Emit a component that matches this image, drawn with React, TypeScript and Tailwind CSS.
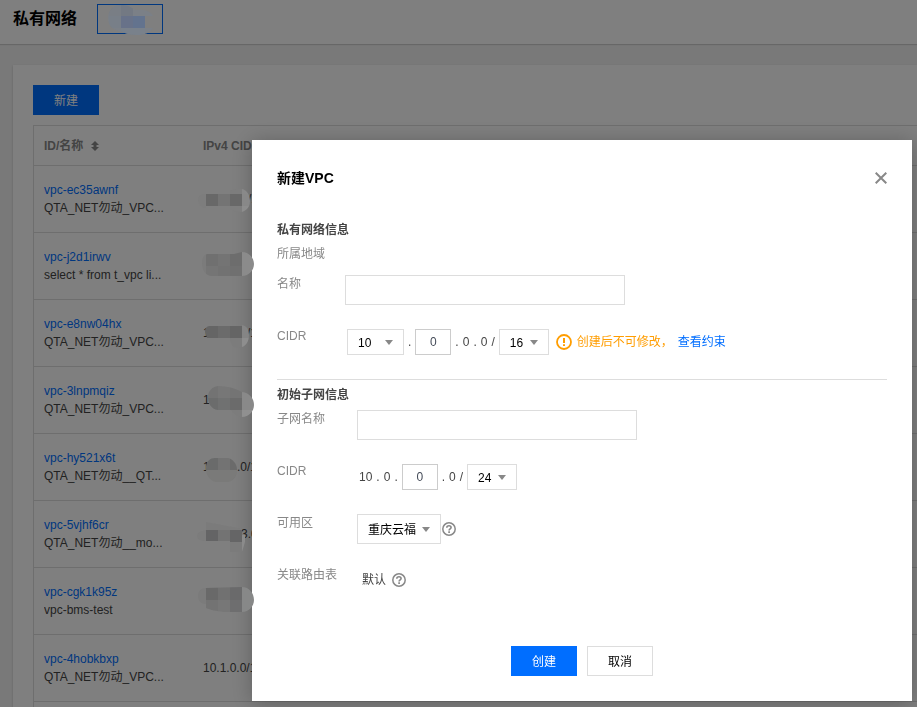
import { useState } from 'react';
import type { ReactNode } from 'react';

// [x, y, width, height, color]
type Tile = [number, number, number, number, string];

interface Vpc {
  id: string;
  name: string;
  cidr?: string;
  head?: string;
  tail?: string;
  headWidth?: string;
  mask?: { shape: string; tiles: Tile[] };
}

const vpcs: Vpc[] = [
  {
    id: 'vpc-ec35awnf',
    name: 'QTA_NET勿动_VPC...',
    tail: '/16',
    headWidth: 'w-[45px]',
    mask: {
      shape: 'M5 34c0-4 3-6 8-6h20c4-5 8-5 16-5 5 1 8 6 8 12s-3 9-8 11c-5 0-10-1-13-4H13c-5 0-8-4-8-8z',
      tiles: [
        [0, 16, 13, 36, '#7d7d7d'],
        [13, 28, 12, 12, '#686868'],
        [25, 28, 12, 12, '#747474'],
        [37, 28, 12, 12, '#686868'],
        [37, 16, 12, 12, '#7d7d7d'],
        [37, 40, 12, 12, '#7e7e7e'],
        [49, 16, 12, 12, '#898989'],
        [49, 28, 12, 12, '#888888'],
        [49, 40, 12, 12, '#8d8d8d'],
      ],
    },
  },
  {
    id: 'vpc-j2d1irwv',
    name: 'select * from t_vpc li...',
    mask: {
      shape: 'M9 30c0-5 2-9 6-9h26l8-2c7 0 12 6 12 12s-5 12-12 12H19c-6 0-10-6-10-13z',
      tiles: [
        [0, 16, 13, 36, '#7b7b7b'],
        [13, 16, 12, 17, '#707070'],
        [25, 16, 12, 17, '#747474'],
        [37, 16, 12, 17, '#6d6d6d'],
        [13, 33, 12, 17, '#757575'],
        [25, 33, 12, 17, '#727272'],
        [37, 33, 12, 17, '#707070'],
        [49, 16, 13, 34, '#8b8b8b'],
      ],
    },
  },
  {
    id: 'vpc-e8nw04hx',
    name: 'QTA_NET勿动_VPC...',
    head: '1',
    tail: '/16',
    headWidth: 'w-[44px]',
    mask: {
      shape: 'M12 32c0-4 2-6 5-6h26l6-1c5 1 7 5 7 10 0 6-3 11-7 12-6 2-11 1-12-9H14z',
      tiles: [
        [12, 26, 13, 12, '#656565'],
        [25, 26, 12, 12, '#6b6b6b'],
        [37, 26, 12, 12, '#656565'],
        [37, 38, 12, 12, '#7c7c7c'],
        [49, 20, 12, 18, '#858585'],
        [49, 38, 12, 12, '#8e8e8e'],
      ],
    },
  },
  {
    id: 'vpc-3lnpmqiz',
    name: 'QTA_NET勿动_VPC...',
    head: '1',
    mask: {
      shape: 'M15 30c0-6 4-10 10-11 9 0 17 2 24 6 8 1 12 7 12 13s-5 12-12 12c-4 0-7-2-11-7H25c-7-1-10-7-10-13z',
      tiles: [
        [12, 16, 13, 15, '#737373'],
        [25, 16, 12, 15, '#777777'],
        [37, 16, 12, 15, '#747474'],
        [12, 31, 13, 12, '#6b6c6c'],
        [25, 31, 12, 12, '#707171'],
        [37, 31, 12, 12, '#6b6b6b'],
        [37, 43, 12, 12, '#7c7c7c'],
        [49, 16, 13, 27, '#898989'],
        [49, 43, 13, 12, '#909090'],
      ],
    },
  },
  {
    id: 'vpc-hy521x6t',
    name: 'QTA_NET勿动__QT...',
    head: '1',
    tail: '.0/16',
    headWidth: 'w-[34px]',
    mask: {
      shape: 'M13 32c1-5 4-8 9-8h13c5 1 9 6 9 12s-3 11-9 12H23c-6-1-10-7-10-13z',
      tiles: [
        [12, 22, 13, 14, '#6a6b6b'],
        [25, 22, 12, 14, '#737373'],
        [37, 22, 10, 14, '#6b6b6b'],
        [12, 36, 35, 14, '#7a7a79'],
      ],
    },
  },
  {
    id: 'vpc-5vjhf6cr',
    name: 'QTA_NET勿动__mo...',
    tail: '3.0/16',
    headWidth: 'w-[38px]',
    mask: {
      shape: 'M4 35c0-3 3-5 9-6v-8l32 6 4 1h3v13l-3 10H37V40H13c-6 0-9-2-9-5z',
      tiles: [
        [0, 16, 13, 36, '#7c7c7c'],
        [13, 20, 36, 9, '#7b7b7b'],
        [13, 29, 12, 12, '#646465'],
        [25, 29, 12, 12, '#737373'],
        [37, 29, 12, 12, '#656566'],
        [37, 41, 12, 12, '#7b7b7b'],
        [49, 34, 6, 16, '#8b8b8b'],
      ],
    },
  },
  {
    id: 'vpc-cgk1k95z',
    name: 'vpc-bms-test',
    mask: {
      shape: 'M5 28c0-5 3-8 8-8l36-1c7 0 12 6 12 13 0 6-5 12-12 12H31c-8-1-13-2-18-4v-4c-5 0-8-3-8-8z',
      tiles: [
        [0, 16, 13, 36, '#7b7b7b'],
        [13, 16, 12, 16, '#696969'],
        [25, 16, 12, 16, '#717171'],
        [37, 16, 12, 16, '#6a6a6b'],
        [13, 32, 12, 14, '#737373'],
        [25, 32, 12, 14, '#777777'],
        [37, 32, 12, 14, '#6e6e6f'],
        [49, 16, 13, 34, '#878888'],
      ],
    },
  },
  { id: 'vpc-4hobkbxp', name: 'QTA_NET勿动_VPC...', cidr: '10.1.0.0/16' },
];

function Mosaic({ id, shape, tiles }: { id: string; shape: string; tiles: Tile[] }) {
  return (
    <svg
      className="pointer-events-none absolute left-0 top-0 z-20"
      width="66"
      height="66"
      viewBox="0 0 66 66"
      aria-hidden="true"
    >
      <clipPath id={id}>
        <path d={shape} />
      </clipPath>
      <g clipPath={`url(#${id})`} shapeRendering="crispEdges">
        {tiles.map(([x, y, w, h, fill], i) => (
          <rect key={i} x={x} y={y} width={w} height={h} fill={fill} />
        ))}
      </g>
    </svg>
  );
}

function SortIcon() {
  return (
    <svg width="8" height="10" viewBox="0 0 8 10" fill="currentColor" aria-hidden="true">
      <path d="M4 0l4 4H5.5v2H8L4 10 0 6h2.5V4H0z" />
    </svg>
  );
}

function HelpIcon() {
  return (
    <svg width="14" height="14" viewBox="0 0 14 14" fill="none" stroke="#888" aria-hidden="true">
      <circle cx="7" cy="7" r="6.2" strokeWidth="1.5" />
      <path d="M4.8 5.7C4.8 4.4 5.7 3.7 7 3.7s2.1.7 2.1 1.8c0 1.3-2 1.4-2 2.9" strokeWidth="1.6" />
      <path d="M7.1 9.3v1.6" strokeWidth="1.7" />
    </svg>
  );
}

function WarningIcon() {
  return (
    <svg width="16" height="16" viewBox="0 0 16 16" fill="none" stroke="#ff9d00" aria-hidden="true">
      <circle cx="8" cy="8" r="7" strokeWidth="1.8" />
      <path d="M8 4v5M8 10.2V12" strokeWidth="2" />
    </svg>
  );
}

interface SelectBoxProps {
  label: string;
  options: string[];
  className: string;
  id?: string;
}

function SelectBox({ label, options, className, id }: SelectBoxProps) {
  return (
    <div className={`relative ${className}`}>
      <select
        id={id}
        aria-label={label}
        className="h-full w-full appearance-none border border-[#ddd] bg-white pt-0.5 pl-2.5 text-black outline-none"
      >
        {options.map((option) => (
          <option key={option}>{option}</option>
        ))}
      </select>
      <svg
        className="pointer-events-none absolute inset-y-0 right-[11px] my-auto"
        width="8"
        height="5"
        viewBox="0 0 8 5"
        fill="#888"
        aria-hidden="true"
      >
        <path d="M0 0h8L4 5z" />
      </svg>
    </div>
  );
}

interface FieldProps {
  label: string;
  htmlFor?: string;
  wide?: boolean;
  children: ReactNode;
}

function Field({ label, htmlFor, wide, children }: FieldProps) {
  return (
    <div className="flex">
      <label htmlFor={htmlFor} className={`shrink-0 text-[#888] ${wide ? 'w-20' : 'w-[68px]'}`}>
        {label}
      </label>
      <div className="flex h-[30px] flex-1 items-center">{children}</div>
    </div>
  );
}

function CreateVpcDialog({ onClose }: { onClose: () => void }) {
  const [name, setName] = useState('');
  const [subnetName, setSubnetName] = useState('');
  const [octet, setOctet] = useState('0');
  const [subnetOctet, setSubnetOctet] = useState('0');

  const octetClass = 'h-[26px] w-9 border border-[#ccc] bg-white text-center text-[#444b58] outline-none';
  const inputClass = 'h-[30px] w-full max-w-[280px] border border-[#ddd] bg-white px-2.5 outline-none';

  return (
    <div className="fixed inset-0 z-10 flex items-end justify-end bg-black/50 px-[5px] pb-1.5">
      <div
        role="dialog"
        aria-modal="true"
        aria-labelledby="dialog-title"
        className="w-full max-w-[660px] bg-white p-[25px] text-[#444] shadow-[0_2px_20px_rgba(0,0,0,0.25)]"
      >
        <div className="flex h-[26px] items-center justify-between">
          <h2 id="dialog-title" className="text-sm font-bold text-black">
            新建VPC
          </h2>
          <button type="button" aria-label="关闭" onClick={onClose}>
            <svg width="12" height="12" viewBox="0 0 12 12" stroke="#888" strokeWidth="2" aria-hidden="true">
              <path d="M.7.7l10.6 10.6M11.3.7L.7 11.3" />
            </svg>
          </button>
        </div>

        <h3 className="mt-[30px] font-bold">私有网络信息</h3>
        <p className="mt-1.5 text-[#888]">所属地域</p>
        <div className="mt-3 flex flex-col gap-[22px]">
          <Field label="名称" htmlFor="vpc-name">
            <input
              id="vpc-name"
              type="text"
              value={name}
              onChange={(e) => setName(e.target.value)}
              className={inputClass}
            />
          </Field>
          <Field label="CIDR" htmlFor="vpc-cidr">
            <div className="ml-0.5 flex items-center gap-1">
              <SelectBox
                id="vpc-cidr"
                label="网段"
                options={['10', '172', '192']}
                className="h-[26px] w-[57px]"
              />
              <span>.</span>
              <input
                type="text"
                aria-label="第二段"
                value={octet}
                onChange={(e) => setOctet(e.target.value)}
                className={octetClass}
              />
              <span>.</span>
              <span>0</span>
              <span>.</span>
              <span>0</span>
              <span>/</span>
              <SelectBox label="掩码" options={['16', '17', '18']} className="h-[26px] w-[50px]" />
            </div>
            <div className="ml-[7px] flex items-center gap-[5px] text-[#ff9d00]">
              <WarningIcon />
              <span>创建后不可修改，</span>
              <a href="#limits" className="text-[#006eff]">
                查看约束
              </a>
            </div>
          </Field>
        </div>

        <hr className="mt-[22px] border-[#ddd]" />

        <h3 className="mt-1.5 font-bold">初始子网信息</h3>
        <div className="mt-1.5 flex flex-col gap-[22px]">
          <Field label="子网名称" htmlFor="subnet-name" wide>
            <input
              id="subnet-name"
              type="text"
              value={subnetName}
              onChange={(e) => setSubnetName(e.target.value)}
              className={inputClass}
            />
          </Field>
          <Field label="CIDR" htmlFor="subnet-cidr" wide>
            <div className="ml-0.5 flex items-center gap-1">
              <span>10</span>
              <span>.</span>
              <span>0</span>
              <span>.</span>
              <input
                id="subnet-cidr"
                type="text"
                value={subnetOctet}
                onChange={(e) => setSubnetOctet(e.target.value)}
                className={octetClass}
              />
              <span>.</span>
              <span>0</span>
              <span>/</span>
              <SelectBox label="子网掩码" options={['24', '25', '26']} className="h-[26px] w-[50px]" />
            </div>
          </Field>
          <Field label="可用区" htmlFor="zone" wide>
            <SelectBox id="zone" label="可用区" options={['重庆云福']} className="mr-px h-[30px] w-[84px]" />
            <HelpIcon />
          </Field>
          <Field label="关联路由表" wide>
            <div className="flex items-center gap-1.5 pb-0.5 pl-[5px]">
              <span>默认</span>
              <HelpIcon />
            </div>
          </Field>
        </div>

        <div className="mt-[50px] flex justify-center gap-2.5">
          <button type="button" className="h-[30px] w-[66px] bg-[#006eff] pt-0.5 text-white">
            创建
          </button>
          <button
            type="button"
            onClick={onClose}
            className="h-[30px] w-[66px] border border-[#ddd] bg-white pt-0.5 text-black"
          >
            取消
          </button>
        </div>
      </div>
    </div>
  );
}

export default function App() {
  const [open, setOpen] = useState(true);

  return (
    <div className="flex min-h-screen flex-col bg-[#f2f2f2] font-['Liberation_Sans','Noto_Sans_CJK_SC',sans-serif] text-xs leading-[18px] text-[#444]">
      <header className="flex h-11 items-start gap-5 bg-white px-[13px] pt-1 shadow-[0_1px_1px_rgba(0,0,0,0.15)]">
        <h1 className="text-base leading-[30px] font-bold text-black">私有网络</h1>
        <button type="button" aria-label="地域" className="relative h-[30px] w-[66px] border border-[#006eff]">
          <svg
            className="pointer-events-none absolute left-0 top-0 z-20"
            width="64"
            height="31"
            viewBox="0 0 64 31"
            aria-hidden="true"
          >
            <clipPath id="region-mask">
              <path d="M10 13C10 5 16 0 24 0c7 0 9 3 14 5 10-1 15 2 17 6H47v12h8c-3 5-9 7-16 7-6 0-10-1-15-3-8-1-14-6-14-14z" />
            </clipPath>
            <g clipPath="url(#region-mask)" shapeRendering="crispEdges">
              <rect width="64" height="31" fill="#7b8087" />
              <rect x="11" width="12" height="11" fill="#797e85" />
              <rect x="23" width="12" height="11" fill="#737983" />
              <rect x="11" y="11" width="12" height="12" fill="#787f88" />
              <rect x="23" y="11" width="12" height="12" fill="#687289" />
              <rect x="35" y="11" width="12" height="12" fill="#63738e" />
              <rect x="23" y="23" width="24" height="8" fill="#79818b" />
            </g>
          </svg>
        </button>
      </header>

      <main className="mt-[21px] ml-[13px] flex flex-1 flex-col bg-white pt-5 pl-5 shadow-[0_1px_2px_rgba(0,0,0,0.2)]">
        <div>
          <button
            type="button"
            onClick={() => setOpen(true)}
            className="h-[30px] w-[66px] bg-[#006eff] pt-0.5 text-white"
          >
            新建
          </button>
        </div>

        <div className="mt-2.5 flex-1 border-t border-l border-[#ddd]">
          <table className="w-full table-fixed border-separate border-spacing-0 text-left">
            <colgroup>
              <col className="w-[159px]" />
              <col />
            </colgroup>
            <thead>
              <tr className="h-10 text-[#888]">
                <th className="border-b border-[#ddd] px-2.5 font-bold">
                  <span className="flex items-center gap-2">
                    ID/名称
                    <SortIcon />
                  </span>
                </th>
                <th className="border-b border-[#ddd] px-2.5 font-bold">IPv4 CIDR</th>
              </tr>
            </thead>
            <tbody>
              {vpcs.map((vpc) => (
                <tr key={vpc.id} className="h-[67px]">
                  <td className="border-b border-[#ddd] px-2.5">
                    <a href={`#${vpc.id}`} className="block text-[#006eff]">
                      {vpc.id}
                    </a>
                    <span className="block truncate">{vpc.name}</span>
                  </td>
                  <td className="relative border-b border-[#ddd] px-2.5">
                    {vpc.cidr ?? (
                      <span className="flex">
                        <span className={vpc.headWidth}>{vpc.head}</span>
                        <span>{vpc.tail}</span>
                      </span>
                    )}
                    {vpc.mask && <Mosaic id={`${vpc.id}-mask`} {...vpc.mask} />}
                  </td>
                </tr>
              ))}
            </tbody>
          </table>
        </div>
      </main>

      {open && <CreateVpcDialog onClose={() => setOpen(false)} />}
    </div>
  );
}
